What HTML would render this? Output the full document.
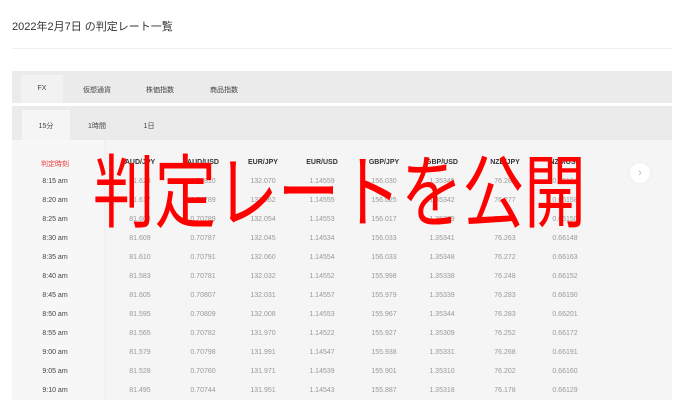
<!DOCTYPE html>
<html><head><meta charset="utf-8"><style>
*{margin:0;padding:0;box-sizing:border-box}
body{width:700px;height:400px;overflow:hidden;background:#fff;font-family:"Liberation Sans","Noto Sans CJK JP",sans-serif;position:relative}
.a{position:absolute}
.t{position:absolute;font-size:7px;color:#999;transform:translateX(-50%);white-space:nowrap}
.h{color:#333;font-weight:bold}
.tm{color:#444}
</style></head><body>
<div class="a" style="left:12px;top:18px;font-size:11px;color:#333">2022年2月7日 の判定レート一覧</div>
<div class="a" style="left:12px;top:48px;width:660px;height:1px;background:#eee"></div>
<div class="a" style="left:12px;top:71px;width:660px;height:329px;background:#f5f5f5"></div>
<div class="a" style="left:12px;top:71px;width:660px;height:32px;background:#ebebeb"></div>
<div class="a" style="left:12px;top:103px;width:660px;height:3px;background:#fff"></div>
<div class="a" style="left:12px;top:106px;width:660px;height:34px;background:#ebebeb"></div>
<div class="a" style="left:21px;top:75px;width:42px;height:28px;background:#f2f2f2"></div>
<div class="a" style="left:22px;top:110px;width:48px;height:30px;background:#f5f5f5"></div>
<div class="a" style="left:12px;top:140px;width:92px;height:260px;background:#f7f7f7;box-shadow:1px 0 2px rgba(0,0,0,0.03)"></div>
<div class="t tm" style="left:42px;top:85px">FX</div>
<div class="t tm" style="left:97px;top:85px">仮想通貨</div>
<div class="t tm" style="left:160px;top:85px">株価指数</div>
<div class="t tm" style="left:224px;top:85px">商品指数</div>
<div class="t tm" style="left:46px;top:121px">15分</div>
<div class="t tm" style="left:97px;top:121px">1時間</div>
<div class="t tm" style="left:149px;top:121px">1日</div>
<div class="a" style="left:640px;top:173px;width:20px;height:20px;margin:-10px;border-radius:50%;background:#fff;box-shadow:0 0 4px rgba(0,0,0,0.05);color:#bbb;font-size:11px;text-align:center;line-height:20px">›</div>
<div id="tb"></div>
<div class="a" style="left:93px;top:141px;font-family:'Noto Sans CJK JP',sans-serif;font-size:80px;line-height:92px;color:#f00;white-space:nowrap;transform:scaleX(0.77);transform-origin:0 0">判定レートを公開</div>
<script>
var cols=[55,140,203,263,322,384,442,505,565];
var hd=["判定時刻","AUD/JPY","AUD/USD","EUR/JPY","EUR/USD","GBP/JPY","GBP/USD","NZD/JPY","NZD/USD"];
var rows=[
["8:15 am","81.628","0.70810","132.070","1.14559","156.030","1.35345","76.286","0.66164"],
["8:20 am","81.617","0.70789","132.062","1.14555","156.025","1.35342","76.277","0.66158"],
["8:25 am","81.603","0.70789","132.054","1.14553","156.017","1.35339","76.253","0.66150"],
["8:30 am","81.609","0.70787","132.045","1.14534","156.033","1.35341","76.263","0.66148"],
["8:35 am","81.610","0.70791","132.060","1.14554","156.033","1.35348","76.272","0.66163"],
["8:40 am","81.583","0.70781","132.032","1.14552","155.998","1.35338","76.248","0.66152"],
["8:45 am","81.605","0.70807","132.031","1.14557","155.979","1.35339","76.283","0.66190"],
["8:50 am","81.595","0.70809","132.008","1.14553","155.967","1.35344","76.283","0.66201"],
["8:55 am","81.565","0.70782","131.970","1.14522","155.927","1.35309","76.252","0.66172"],
["9:00 am","81.579","0.70798","131.991","1.14547","155.938","1.35331","76.268","0.66191"],
["9:05 am","81.528","0.70760","131.971","1.14539","155.901","1.35310","76.202","0.66160"],
["9:10 am","81.495","0.70744","131.951","1.14543","155.887","1.35318","76.178","0.66129"]];
var s="";
hd.forEach(function(h,i){s+='<div class="t h" style="left:'+cols[i]+'px;top:159px;'+(i==0?'color:#e33;font-weight:normal':'')+'">'+h+'</div>';});
rows.forEach(function(r,j){r.forEach(function(v,i){s+='<div class="t'+(i==0?' tm':'')+'" style="left:'+cols[i]+'px;top:'+(178+j*19)+'px">'+v+'</div>';});});
document.getElementById('tb').innerHTML=s;
</script>
</body></html>
